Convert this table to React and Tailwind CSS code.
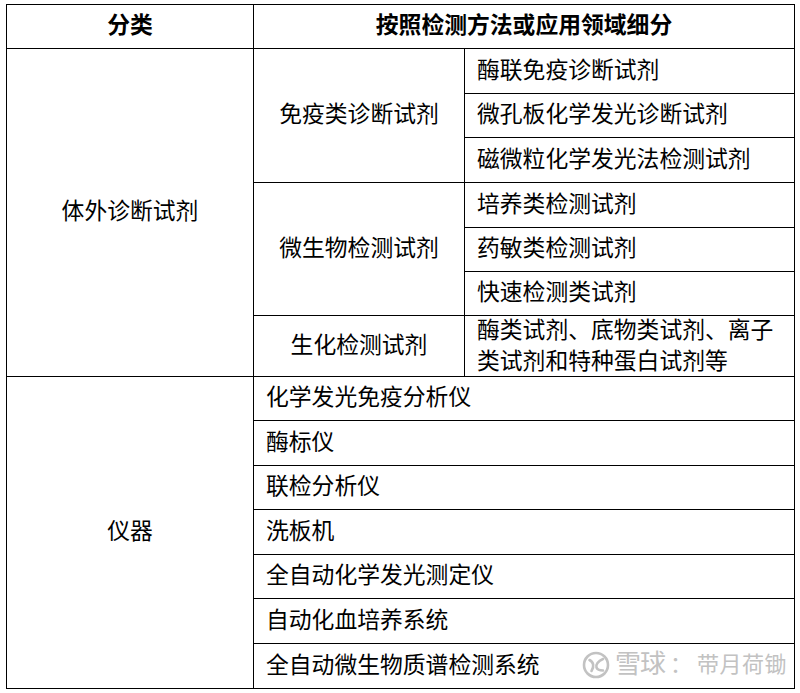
import React from "react";

const font = { fontFamily: '"Liberation Serif", "Noto Sans CJK SC", serif' };

const instruments = [
  "化学发光免疫分析仪",
  "酶标仪",
  "联检分析仪",
  "洗板机",
  "全自动化学发光测定仪",
  "自动化血培养系统",
  "全自动微生物质谱检测系统",
];

function Watermark() {
  return (
    <div className="absolute left-[582px] top-[651px] flex items-center gap-[5px] text-[#c2c2c2]">
      <svg className="shrink-0 w-[28px] h-[28px]" viewBox="0 0 28 28" fill="none" stroke="#c2c2c2" strokeWidth="2.6" strokeLinecap="round">
        <circle cx="14" cy="14" r="12" />
        <path d="M7.5 9 C11.5 11 12.5 15.5 9.5 20" />
        <path d="M21 8 C16 10 13.5 14 14.5 16.5 C15.5 19 18.5 19.5 21 19.5" />
      </svg>
      <span className="text-[26px] leading-none tracking-[-1px]">雪球</span>
      <span className="text-[22px] leading-none">：</span>
      <span className="text-[22px] leading-none tracking-[0.5px]">带月荷锄</span>
    </div>
  );
}

export default function App() {
  return (
    <div className="relative w-[800px] h-[693px] bg-white text-black" style={font}>
      <div className="pt-[4px] pl-[6px]">
        <div className="grid w-fit bg-black p-px gap-px grid-cols-[246px_210px_329px] grid-rows-[43px_44px_43px_44px_44px_43px_43px_60px_43px_44px_43px_44px_43px_44px_44px] text-[22.8px]">
          {/* header */}
          <div className="bg-white flex items-center justify-center font-bold">分类</div>
          <div className="col-span-2 bg-white flex items-center justify-center font-bold">
            按照检测方法或应用领域细分
          </div>

          {/* 体外诊断试剂 */}
          <div className="row-span-7 bg-white flex items-center justify-center">体外诊断试剂</div>
          <div className="row-span-3 bg-white flex items-center justify-center">免疫类诊断试剂</div>
          <div className="bg-white flex items-center pl-[12px]">酶联免疫诊断试剂</div>
          <div className="col-start-3 bg-white flex items-center pl-[12px]">微孔板化学发光诊断试剂</div>
          <div className="col-start-3 bg-white flex items-center pl-[12px]">磁微粒化学发光法检测试剂</div>

          <div className="col-start-2 row-span-3 bg-white flex items-center justify-center">微生物检测试剂</div>
          <div className="bg-white flex items-center pl-[12px]">培养类检测试剂</div>
          <div className="col-start-3 bg-white flex items-center pl-[12px]">药敏类检测试剂</div>
          <div className="col-start-3 bg-white flex items-center pl-[12px]">快速检测类试剂</div>

          <div className="col-start-2 bg-white flex items-center justify-center">生化检测试剂</div>
          <div className="bg-white flex flex-col justify-center pl-[12px] leading-[31px]">
            <span>酶类试剂、底物类试剂、离子</span>
            <span>类试剂和特种蛋白试剂等</span>
          </div>

          {/* 仪器 */}
          <div className="row-span-7 bg-white flex items-center justify-center">仪器</div>
          {instruments.map((name) => (
            <div key={name} className="col-start-2 col-span-2 bg-white flex items-center pl-[12px]">
              {name}
            </div>
          ))}
        </div>
      </div>
      <Watermark />
    </div>
  );
}
